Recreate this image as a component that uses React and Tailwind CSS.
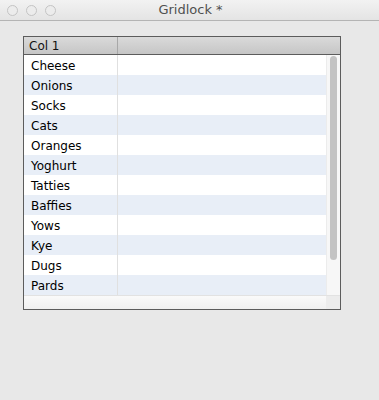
import React from 'react'

const rows = ['Cheese', 'Onions', 'Socks', 'Cats', 'Oranges', 'Yoghurt', 'Tatties', 'Baffies', 'Yows', 'Kye', 'Dugs', 'Pards']

const font = { fontFamily: '"DejaVu Sans", "Liberation Sans", sans-serif' }

const App = () => {
    return (
        <div className="w-[379px] h-[400px] bg-[#e8e8e8] flex flex-col overflow-hidden" style={font}>
            {/* title bar */}
            <div className="h-[21px] shrink-0 bg-gradient-to-b from-[#f2f2f2] to-[#e4e4e4] border-b border-[#b4b4b4] flex items-center relative">
                <div className="flex gap-[8px] pl-[7px] pt-[1px]">
                    <div className="w-[11px] h-[11px] rounded-full border border-[#c4c4c4] bg-[#ececec]" />
                    <div className="w-[11px] h-[11px] rounded-full border border-[#c4c4c4] bg-[#ececec]" />
                    <div className="w-[11px] h-[11px] rounded-full border border-[#c4c4c4] bg-[#ececec]" />
                </div>
                <div className="absolute inset-0 flex items-center justify-center text-[13px] text-[#505050] pl-[2px]">Gridlock *</div>
            </div>

            {/* table */}
            <div className="pt-[15px] pl-[23px]">
                <div className="w-[318px] h-[274px] border border-[#5c5c5c] bg-white flex flex-col">
                    <div className="h-[18px] shrink-0 bg-gradient-to-b from-[#dadada] to-[#c6c6c6] border-b border-[#5c5c5c] flex text-[12px] text-[#111]">
                        <div className="w-[94px] border-r border-[#a8a8a8] pl-[5px] flex items-center">Col 1</div>
                        <div className="flex-1" />
                    </div>
                    <div className="flex h-[240px]">
                        <div className="w-[302px] flex flex-col">
                            {rows.map((r, i) => (
                                <div key={r} className={`h-[20px] flex text-[12px] text-black ${i % 2 === 1 ? 'bg-[#e8eef7]' : 'bg-white'}`}>
                                    <div className="w-[94px] border-r border-[#e0e0e0] pl-[7px] pt-[2px] flex items-center">{r}</div>
                                    <div className="flex-1" />
                                </div>
                            ))}
                        </div>
                        <div className="w-[14px] bg-[#f7f7f7] border-l border-[#ececec] flex justify-center pt-[1px]">
                            <div className="w-[7px] h-[204px] rounded-full bg-[#c3c3c3]" />
                        </div>
                    </div>
                    <div className="h-[14px] flex border-t border-[#e2e2e2]">
                        <div className="w-[302px] bg-gradient-to-b from-[#fafafa] to-[#f0f0f0]" />
                        <div className="flex-1 bg-[#ececec]" />
                    </div>
                </div>
            </div>
        </div>
    )
}

export default App
